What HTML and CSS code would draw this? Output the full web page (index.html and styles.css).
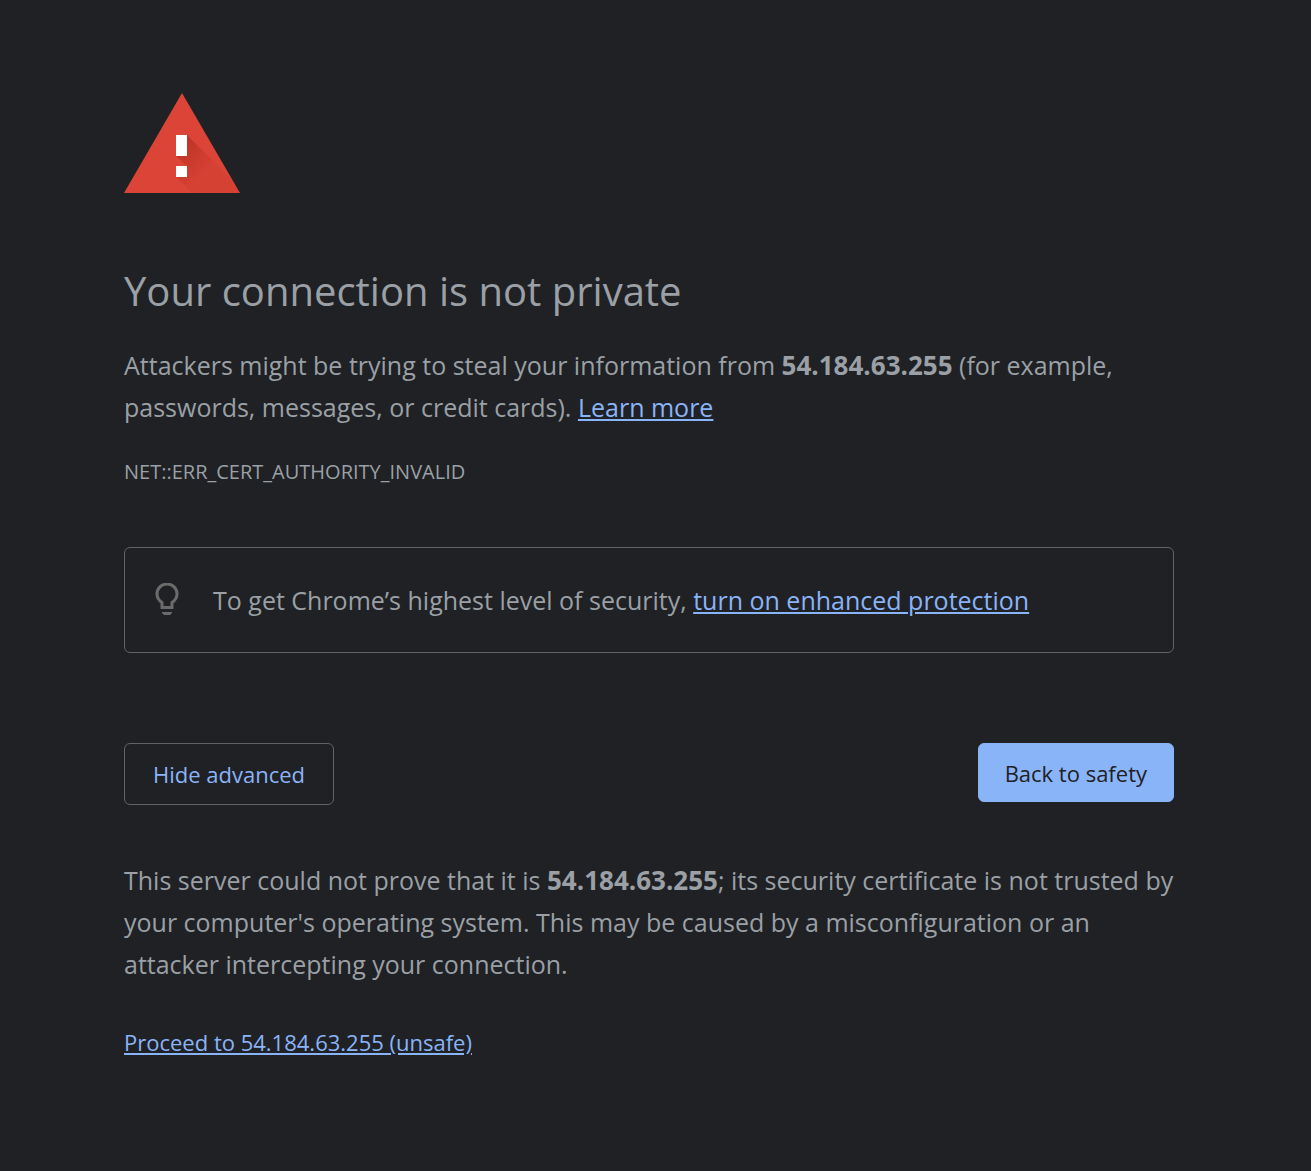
FILE: index.html
```html
<!DOCTYPE html>
<html lang="en">
<head>
  <meta charset="UTF-8">
  <meta name="viewport" content="width=device-width, initial-scale=1">
  <title>Privacy error</title>
  <link rel="stylesheet" href="styles.css">
</head>
<body>
  <main class="interstitial">
    <svg class="icon" viewBox="0 0 116 100" aria-hidden="true">
      <defs>
        <linearGradient id="shade" gradientUnits="userSpaceOnUse" x1="56" y1="56" x2="80" y2="80">
          <stop offset="0" stop-color="#a52714" stop-opacity=".5"/>
          <stop offset="1" stop-color="#a52714" stop-opacity=".1"/>
        </linearGradient>
      </defs>
      <path fill="#db4437" d="M58 0l58 100H0z"/>
      <path fill="url(#shade)" d="M63 42l46 46 7 12H68L52 84l11-11-11-10z"/>
      <path fill="#fff" d="M52 42h11v21H52zM52 73h11v11H52z"/>
    </svg>

    <h1>Your connection is not private</h1>
    <p>Attackers might be trying to steal your information from <strong>54.184.63.255</strong> (for example, passwords, messages, or credit cards). <a href="#">Learn more</a></p>
    <div class="error-code">NET::ERR_CERT_AUTHORITY_INVALID</div>

    <div class="promo">
      <svg class="bulb" viewBox="0 0 24 34" aria-hidden="true">
        <path fill="none" stroke="#6b6b6b" stroke-width="3" d="M7 24.500v-5C4 17.500 2 14.500 2 11a10 10 0 0 1 20 0C22 14.500 20 17.500 17 19.500v5z"/>
        <path fill="#6b6b6b" d="M7 29h10v1l-2 2H9l-2-2z"/>
      </svg>
      <div>To get Chrome’s highest level of security, <a href="#">turn on enhanced protection</a></div>
    </div>

    <div class="buttons">
      <button class="details-button" type="button">Hide advanced</button>
      <button class="primary-button" type="button">Back to safety</button>
    </div>

    <div class="details">
      <p>This server could not prove that it is <strong>54.184.63.255</strong>; its security certificate is not trusted by your computer's operating system. This may be caused by a misconfiguration or an attacker intercepting your connection.</p>
      <a class="proceed" href="#">Proceed to 54.184.63.255 (unsafe)</a>
    </div>
  </main>
</body>
</html>
```
FILE: styles.css
```css
body {
  margin: 0;
  padding-right: 13px;
  background: #202124;
  color: #9aa0a6;
  font-family: "Open Sans", "Noto Sans", sans-serif;
  font-size: 25px;
  line-height: 42px;
}
.interstitial {
  box-sizing: border-box;
  width: 84%;
  max-width: 1050px;
  margin: 0 auto;
  padding-top: 93px;
}
.icon {
  display: block;
  width: 116px;
  height: 100px;
}
h1 {
  margin: 70px 0 25px;
  font-size: 40px;
  font-weight: 400;
  line-height: 56px;
}
p {
  margin: 0;
}
strong {
  font-size: 26px;
  line-height: 1;
}
a {
  color: #8ab4f8;
}
.error-code {
  margin-top: 26px;
  font-size: 20px;
  line-height: 36px;
}
.promo {
  display: flex;
  align-items: center;
  gap: 34px;
  margin-top: 57px;
  padding: 31px 30px;
  border: 1px solid #5f6368;
  border-radius: 6px;
}
.bulb {
  flex: none;
  width: 24px;
  height: 34px;
}
.buttons {
  display: flex;
  justify-content: space-between;
  align-items: flex-start;
  margin-top: 90px;
}
button {
  padding: 0 28px;
  border: 1px solid #5f6368;
  border-radius: 6px;
  font: inherit;
  font-size: 22px;
  cursor: pointer;
}
.details-button {
  height: 62px;
  background: transparent;
  color: #8ab4f8;
}
.primary-button {
  height: 59px;
  padding: 0 26px;
  border-color: #8ab4f8;
  background: #8ab4f8;
  color: #202124;
}
.details {
  margin-top: 54px;
}
.proceed {
  display: inline-block;
  margin-top: 36px;
  font-size: 22px;
}
```
